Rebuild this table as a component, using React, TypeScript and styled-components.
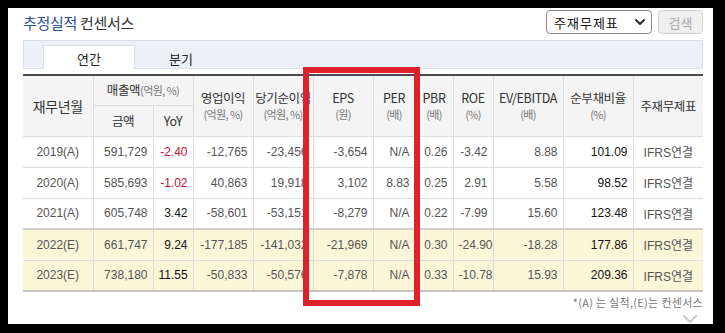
import React from 'react';
import styled, { createGlobalStyle } from 'styled-components';

const GlobalStyle = createGlobalStyle`
  html, body {
    margin: 0;
    background: #000;
  }
  body {
    padding: 8px 12px 9px 8px;
    font-family: "Liberation Sans", "Noto Sans CJK KR", sans-serif;
  }
`;

const Panel = styled.div`
  width: 705px;
  height: 316px;
  box-sizing: border-box;
  background: #fff;
  padding: 2px 10px 0 15px;
  overflow: hidden;
`;

const TitleRow = styled.div`
  display: flex;
  align-items: center;
  justify-content: space-between;
  height: 24px;
`;

const Title = styled.h2`
  margin: 0;
  font-size: 15px;
  font-weight: normal;
  color: #333;
  font-family: "Noto Sans CJK KR", sans-serif;
  letter-spacing: -0.3px;

  em {
    font-style: normal;
    color: #2c4d9c;
  }
`;

const Controls = styled.div`
  display: flex;
  gap: 6px;
`;

const SelectBox = styled.div`
  width: 106px;
  height: 24px;
  box-sizing: border-box;
  border: 1px solid #8a8a8a;
  border-radius: 4px;
  display: flex;
  align-items: center;
  justify-content: space-between;
  padding: 0 6px 0 7px;
  font-size: 13px;
  color: #111;
  font-family: "Noto Sans CJK KR", sans-serif;
  letter-spacing: 1px;
`;

const SearchButton = styled.button`
  width: 45px;
  height: 24px;
  border: 1px solid #d2d2d2;
  border-radius: 4px;
  background: #efefef;
  color: #a8a8a8;
  font-size: 13px;
  font-family: "Noto Sans CJK KR", sans-serif;
  padding: 0;
`;

const TabBar = styled.div`
  margin-top: 6px;
  height: 29px;
  box-sizing: border-box;
  background: #edf1f7;
  border: 1px solid #d9e0ea;
  display: flex;
  align-items: flex-end;
  padding-left: 19px;
`;

const Tab = styled.div<{ $active?: boolean }>`
  width: 92px;
  height: 24px;
  box-sizing: border-box;
  margin-bottom: -1px;
  display: flex;
  align-items: center;
  justify-content: center;
  font-size: 13px;
  color: #222;
  font-family: "Noto Sans CJK KR", sans-serif;
  background: ${(p) => (p.$active ? '#fff' : 'transparent')};
  border: 1px solid ${(p) => (p.$active ? '#d9e0ea' : 'transparent')};
  border-bottom: none;
  padding-top: 2px;
`;

const TableWrap = styled.div`
  position: relative;
  margin-top: 5px;
  width: 680px;
`;

const Table = styled.table`
  width: 680px;
  table-layout: fixed;
  border-collapse: collapse;
  border-top: 2px solid #4a4a4a;
  border-bottom: 2px solid #c4c4c4;
  font-size: 12px;
`;

const Th = styled.th<{ $big?: boolean }>`
  background: #f4f4f4;
  border: 1px solid #dcdcdc;
  border-top: none;
  font-weight: normal;
  color: #333;
  font-size: ${(p) => (p.$big ? '14px' : '12.5px')};
  letter-spacing: -0.4px;
  line-height: 18px;
  padding: 0;
  white-space: nowrap;
  overflow: hidden;
  font-family: "Noto Sans CJK KR", "Liberation Sans", sans-serif;

  &:first-child {
    border-left: none;
  }
  &:last-child {
    border-right: none;
  }
`;

const Unit = styled.span<{ $inline?: boolean }>`
  display: ${(p) => (p.$inline ? 'inline' : 'block')};
  font-size: 11px;
  line-height: ${(p) => (p.$inline ? 'inherit' : '15px')};
  letter-spacing: -0.6px;
  color: #777;
`;

const HeadRow = styled.tr<{ $h: number }>`
  height: ${(p) => p.$h}px;
`;

const BodyRow = styled.tr<{ $est?: boolean; $first?: boolean }>`
  height: 31px;
  background: ${(p) => (p.$est ? '#fcf6d9' : '#fff')};
  border-top: ${(p) => (p.$first ? '2px solid #d0d0d0' : '1px solid #dcdcdc')};
`;

const Td = styled.td<{ $align?: string; $tone?: 'red' | 'dark' | 'normal' }>`
  border-left: 1px solid #dcdcdc;
  border-right: 1px solid #dcdcdc;
  padding: 0 5px;
  text-align: ${(p) => p.$align || 'right'};
  white-space: nowrap;
  overflow: hidden;
  color: ${(p) => (p.$tone === 'red' ? '#c8102e' : p.$tone === 'dark' ? '#111' : '#555')};
  font-family: "Liberation Sans", "Noto Sans CJK KR", sans-serif;

  &:first-child {
    border-left: none;
  }
  &:last-child {
    border-right: none;
  }
`;

const Highlight = styled.div`
  position: absolute;
  left: 280px;
  top: -7px;
  width: 117px;
  height: 239px;
  box-sizing: border-box;
  border: 6px solid #e0202b;
  pointer-events: none;
`;

const Footnote = styled.div`
  width: 680px;
  margin-top: 2px;
  text-align: right;
  font-size: 11px;
  color: #777;
  font-family: "Noto Sans CJK KR", sans-serif;
  letter-spacing: 0.3px;
`;

const MoreRow = styled.div`
  width: 680px;
  display: flex;
  justify-content: flex-end;
  padding-right: 5px;
  box-sizing: border-box;
  margin-top: 4px;
`;

type Row = {
  year: string;
  est?: boolean;
  sales: string;
  yoy: string;
  yoyRed?: boolean;
  op: string;
  net: string;
  eps: string;
  per: string;
  pbr: string;
  roe: string;
  ev: string;
  debt: string;
};

const rows: Row[] = [
  { year: '2019(A)', sales: '591,729', yoy: '-2.40', yoyRed: true, op: '-12,765', net: '-23,456', eps: '-3,654', per: 'N/A', pbr: '0.26', roe: '-3.42', ev: '8.88', debt: '101.09' },
  { year: '2020(A)', sales: '585,693', yoy: '-1.02', yoyRed: true, op: '40,863', net: '19,918', eps: '3,102', per: '8.83', pbr: '0.25', roe: '2.91', ev: '5.58', debt: '98.52' },
  { year: '2021(A)', sales: '605,748', yoy: '3.42', op: '-58,601', net: '-53,151', eps: '-8,279', per: 'N/A', pbr: '0.22', roe: '-7.99', ev: '15.60', debt: '123.48' },
  { year: '2022(E)', est: true, sales: '661,747', yoy: '9.24', op: '-177,185', net: '-141,032', eps: '-21,969', per: 'N/A', pbr: '0.30', roe: '-24.90', ev: '-18.28', debt: '177.86' },
  { year: '2023(E)', est: true, sales: '738,180', yoy: '11.55', op: '-50,833', net: '-50,576', eps: '-7,878', per: 'N/A', pbr: '0.33', roe: '-10.78', ev: '15.93', debt: '209.36' },
];

const widths = [70, 60, 40, 60, 60, 60, 42, 38, 40, 70, 70, 70];

const Chevron = ({ size = 10, color = '#222', w = 1.8 }: { size?: number; color?: string; w?: number }) => (
  <svg width={size} height={size * 0.6} viewBox="0 0 10 6" fill="none">
    <path d="M1 1l4 4 4-4" stroke={color} strokeWidth={w} strokeLinecap="round" strokeLinejoin="round" />
  </svg>
);

export default function App() {
  return (
    <>
      <GlobalStyle />
      <Panel>
        <TitleRow>
          <Title>
            <em>추정실적</em> 컨센서스
          </Title>
          <Controls>
            <SelectBox>
              <span>주재무제표</span>
              <Chevron />
            </SelectBox>
            <SearchButton>검색</SearchButton>
          </Controls>
        </TitleRow>

        <TabBar>
          <Tab $active>연간</Tab>
          <Tab>분기</Tab>
        </TabBar>

        <TableWrap>
          <Table>
            <colgroup>
              {widths.map((w, i) => (
                <col key={i} style={{ width: w }} />
              ))}
            </colgroup>
            <thead>
              <HeadRow $h={30}>
                <Th rowSpan={2} $big>재무년월</Th>
                <Th colSpan={2}>
                  매출액<Unit $inline>(억원, %)</Unit>
                </Th>
                <Th rowSpan={2}>
                  영업이익<Unit>(억원, %)</Unit>
                </Th>
                <Th rowSpan={2}>
                  당기순이익<Unit>(억원, %)</Unit>
                </Th>
                <Th rowSpan={2}>
                  EPS<Unit>(원)</Unit>
                </Th>
                <Th rowSpan={2}>
                  PER<Unit>(배)</Unit>
                </Th>
                <Th rowSpan={2}>
                  PBR<Unit>(배)</Unit>
                </Th>
                <Th rowSpan={2}>
                  ROE<Unit>(%)</Unit>
                </Th>
                <Th rowSpan={2}>
                  EV/EBITDA<Unit>(배)</Unit>
                </Th>
                <Th rowSpan={2}>
                  순부채비율<Unit>(%)</Unit>
                </Th>
                <Th rowSpan={2}>주재무제표</Th>
              </HeadRow>
              <HeadRow $h={31}>
                <Th>금액</Th>
                <Th>YoY</Th>
              </HeadRow>
            </thead>
            <tbody>
              {rows.map((r, i) => (
                <BodyRow key={r.year} $est={r.est} $first={r.est && !rows[i - 1]?.est}>
                  <Td $align="center" $tone="normal">{r.year}</Td>
                  <Td>{r.sales}</Td>
                  <Td $tone={r.yoyRed ? 'red' : 'dark'}>{r.yoy}</Td>
                  <Td>{r.op}</Td>
                  <Td>{r.net}</Td>
                  <Td>{r.eps}</Td>
                  <Td>{r.per}</Td>
                  <Td>{r.pbr}</Td>
                  <Td>{r.roe}</Td>
                  <Td>{r.ev}</Td>
                  <Td $tone="dark">{r.debt}</Td>
                  <Td $align="center">IFRS연결</Td>
                </BodyRow>
              ))}
            </tbody>
          </Table>
          <Highlight />
        </TableWrap>

        <Footnote>*(A) 는 실적,(E)는 컨센서스</Footnote>
        <MoreRow>
          <Chevron size={16} color="#c8c8c8" w={1.2} />
        </MoreRow>
      </Panel>
    </>
  );
}
